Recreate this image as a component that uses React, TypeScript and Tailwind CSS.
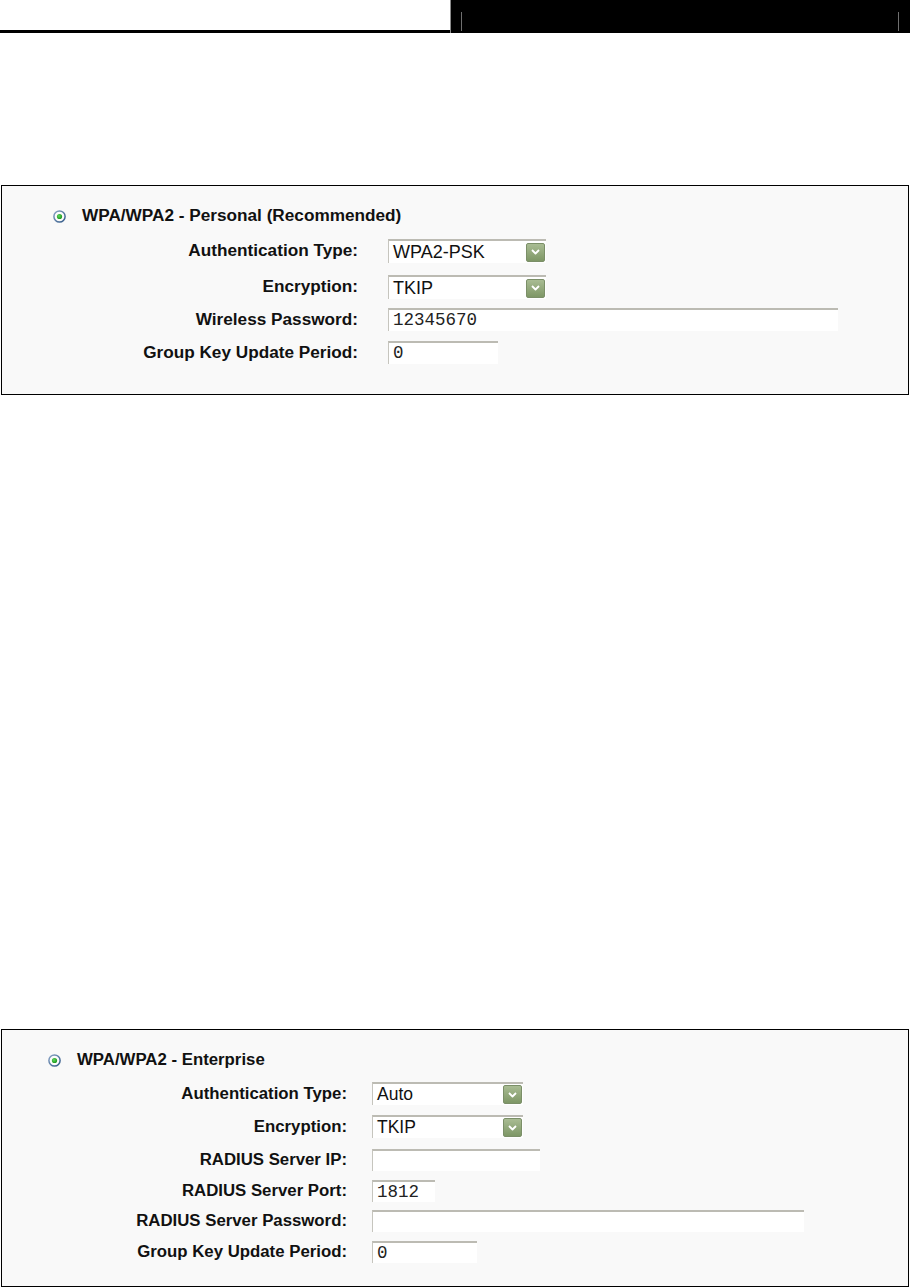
import React from 'react';

const sans = { fontFamily: '"Liberation Sans", Arial, sans-serif' };
const mono = { fontFamily: '"Liberation Mono", "Courier New", monospace' };

function Radio() {
  return (
    <svg width="13" height="13" viewBox="0 0 13 13" className="shrink-0">
      <defs>
        <linearGradient id="ring" x1="0" y1="0" x2="1" y2="1">
          <stop offset="0" stopColor="#8aa4c6" />
          <stop offset="1" stopColor="#2f5785" />
        </linearGradient>
        <radialGradient id="dot" cx="0.4" cy="0.4" r="0.7">
          <stop offset="0" stopColor="#5fd85f" />
          <stop offset="1" stopColor="#128f12" />
        </radialGradient>
      </defs>
      <circle cx="6.5" cy="6.5" r="5.6" fill="#fbfbfb" stroke="url(#ring)" strokeWidth="1.5" />
      <circle cx="6.5" cy="6.5" r="2.6" fill="url(#dot)" />
    </svg>
  );
}

function Arrow() {
  return (
    <div className="flex h-[19px] w-[19px] shrink-0 items-center justify-center rounded-[2px] border border-[#7b8f68] bg-gradient-to-b from-[#a9bc93] to-[#7e9766]">
      <svg width="9" height="6" viewBox="0 0 9 6">
        <path d="M1 1 L4.5 4.5 L8 1" fill="none" stroke="#ffffff" strokeWidth="1.8" strokeLinejoin="round" />
      </svg>
    </div>
  );
}

function Select({ value, width, size }: { value: string; width: string; size: string }) {
  return (
    <div className={`flex h-full items-center border-t-2 border-l border-t-[#bcbbb3] border-l-[#c6c5be] bg-white pl-[4px] pr-[1px] ${width}`}>
      <span className={`flex-1 text-[#111] ${size}`} style={sans}>{value}</span>
      <Arrow />
    </div>
  );
}

function TextBox({ value, width }: { value?: string; width: string }) {
  return (
    <div className={`flex h-full items-center border-t-2 border-l border-t-[#bcbbb3] border-l-[#c6c5be] bg-white pl-[4px] ${width}`}>
      <span className="text-[17.5px] text-[#222]" style={mono}>{value}</span>
    </div>
  );
}

function Row({ label, labelW, gap, h, mt, size, children }: {
  label: string; labelW: string; gap: string; h: string; mt: string; size: string; children: React.ReactNode;
}) {
  return (
    <div className={`flex items-center ${h} ${mt}`}>
      <div className={`shrink-0 text-right font-bold text-[#111] ${labelW} ${size}`} style={sans}>{label}</div>
      <div className={`h-full ${gap}`}>{children}</div>
    </div>
  );
}

export default function App() {
  const pL = 'w-[356px]';
  const pG = 'ml-[30px]';
  const pS = 'text-[17.2px]';
  const eL = 'w-[345px]';
  const eG = 'ml-[25px]';
  const eS = 'text-[16.8px]';

  return (
    <div className="h-[1287px] w-[910px] bg-white">
      {/* page header */}
      <div className="flex h-[33px]">
        <div className="w-[450px] border-b-[3px] border-black" />
        <div className="flex w-[460px] border-l border-[#8a8a8a] bg-black pb-[2px] pl-[10px] pr-[11px] pt-[12px]">
          <div className="flex-1 border-l border-r border-[#6f6f6f]" />
        </div>
      </div>

      {/* WPA/WPA2 - Personal */}
      <div className="ml-[1px] mt-[152px] w-[908px] border border-black bg-[#f9f9f9] pb-[30px] pt-[20px]">
        <div className="flex h-[20px] items-center gap-[16px] pl-[51px]">
          <Radio />
          <span className={`font-bold text-[#111] ${pS}`} style={sans}>WPA/WPA2 - Personal (Recommended)</span>
        </div>
        <Row label="Authentication Type:" labelW={pL} gap={pG} h="h-[24px]" mt="mt-[13px]" size={pS}>
          <Select value="WPA2-PSK" width="w-[158px]" size="text-[18px]" />
        </Row>
        <Row label="Encryption:" labelW={pL} gap={pG} h="h-[24px]" mt="mt-[12px]" size={pS}>
          <Select value="TKIP" width="w-[158px]" size="text-[18px]" />
        </Row>
        <Row label="Wireless Password:" labelW={pL} gap={pG} h="h-[23px]" mt="mt-[9px]" size={pS}>
          <TextBox value="12345670" width="w-[450px]" />
        </Row>
        <Row label="Group Key Update Period:" labelW={pL} gap={pG} h="h-[23px]" mt="mt-[10px]" size={pS}>
          <TextBox value="0" width="w-[110px]" />
        </Row>
      </div>

      {/* WPA/WPA2 - Enterprise */}
      <div className="ml-[1px] mt-[634px] w-[908px] border border-black bg-[#f9f9f9] pb-[23px] pt-[20px]">
        <div className="flex h-[20px] items-center gap-[16px] pl-[46px]">
          <Radio />
          <span className={`font-bold text-[#111] ${eS}`} style={sans}>WPA/WPA2 - Enterprise</span>
        </div>
        <Row label="Authentication Type:" labelW={eL} gap={eG} h="h-[23px]" mt="mt-[12px]" size={eS}>
          <Select value="Auto" width="w-[151px]" size="text-[17.5px]" />
        </Row>
        <Row label="Encryption:" labelW={eL} gap={eG} h="h-[23px]" mt="mt-[10px]" size={eS}>
          <Select value="TKIP" width="w-[151px]" size="text-[17.5px]" />
        </Row>
        <Row label="RADIUS Server IP:" labelW={eL} gap={eG} h="h-[22px]" mt="mt-[11px]" size={eS}>
          <TextBox width="w-[168px]" />
        </Row>
        <Row label="RADIUS Server Port:" labelW={eL} gap={eG} h="h-[22px]" mt="mt-[9px]" size={eS}>
          <TextBox value="1812" width="w-[63px]" />
        </Row>
        <Row label="RADIUS Server Password:" labelW={eL} gap={eG} h="h-[22px]" mt="mt-[8px]" size={eS}>
          <TextBox width="w-[432px]" />
        </Row>
        <Row label="Group Key Update Period:" labelW={eL} gap={eG} h="h-[22px]" mt="mt-[9px]" size={eS}>
          <TextBox value="0" width="w-[105px]" />
        </Row>
      </div>
    </div>
  );
}
